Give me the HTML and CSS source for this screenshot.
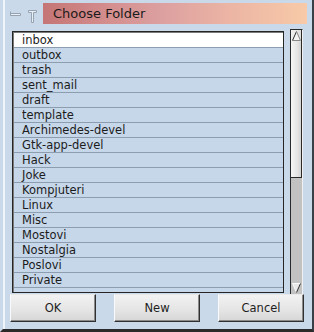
FILE: index.html
```html
<!DOCTYPE html>
<html>
<head>
<meta charset="utf-8">
<link rel="stylesheet" href="styles.css">
</head>
<body>
<div class="window">
  <div class="titlerow">
    <div class="ticons">
      <svg width="40" height="21" viewBox="0 0 40 21">
        <path d="M7.5 10.5 H17.5 V12.5 H7.5 Z" fill="#e6eef6" stroke="#97a3b0" stroke-width="1"/>
        <path d="M7.5 8.5 V12.5" stroke="#97a3b0" stroke-width="1"/>
        <path d="M25.5 7.5 H33.5 V9.5 H30.5 V19.5 H28.5 V9.5 H25.5 Z" fill="#e6eef6" stroke="#97a3b0" stroke-width="1"/>
      </svg>
    </div>
    <div class="title">Choose Folder</div>
  </div>
  <div class="content">
    <div class="list">
      <div class="row sel">inbox</div>
      <div class="row">outbox</div>
      <div class="row">trash</div>
      <div class="row">sent_mail</div>
      <div class="row">draft</div>
      <div class="row">template</div>
      <div class="row">Archimedes-devel</div>
      <div class="row">Gtk-app-devel</div>
      <div class="row">Hack</div>
      <div class="row">Joke</div>
      <div class="row">Kompjuteri</div>
      <div class="row">Linux</div>
      <div class="row">Misc</div>
      <div class="row">Mostovi</div>
      <div class="row">Nostalgia</div>
      <div class="row">Poslovi</div>
      <div class="row">Private</div>
    </div>
    <div class="scrollbar">
      <div class="arrow up">
        <svg width="11" height="12" viewBox="0 0 11 12">
          <path d="M1.5 10.5 L5.5 1.5 L9.5 10.5 Z" fill="#f4f4f4"/>
          <path d="M1.5 10.5 L5.5 1.5" stroke="#303030" stroke-width="1" fill="none"/>
          <path d="M5.5 1.5 L9.5 10.5 L1.5 10.5" stroke="#888" stroke-width="1" fill="none"/>
        </svg>
      </div>
      <div class="thumb"></div>
      <div class="trough"></div>
      <div class="arrow down">
        <svg width="11" height="12" viewBox="0 0 11 12">
          <path d="M1.5 1.5 L9.5 1.5 L5.5 10.5 Z" fill="#e8e8e8"/>
          <path d="M1.5 1.5 L9.5 1.5 M1.5 1.5 L5.5 10.5" stroke="#fafafa" stroke-width="1" fill="none"/>
          <path d="M9.5 1.5 L5.5 10.5" stroke="#303030" stroke-width="1" fill="none"/>
        </svg>
      </div>
    </div>
  </div>
  <div class="buttons">
    <div class="btn">OK</div>
    <div class="btn">New</div>
    <div class="btn">Cancel</div>
  </div>
</div>
</body>
</html>
```
FILE: styles.css
```css
html, body {
  margin: 0;
  padding: 0;
}
body {
  width: 314px;
  height: 332px;
  background: #c9d9e9;
  font-family: "DejaVu Sans", Verdana, sans-serif;
  color: #1c1c1c;
  overflow: hidden;
}
.window {
  box-sizing: border-box;
  width: 314px;
  height: 332px;
  border-left: 3px solid #c9d9e9;
  box-shadow: inset 2px 0 0 #eef4fa, inset 1px 0 0 #aebdcc;
  border-right: 2px solid #3a4048;
  border-bottom: 3px solid #2a2a2a;
  display: flex;
  flex-direction: column;
}
.titlerow {
  display: flex;
  margin-top: 3px;
  height: 21px;
}
.ticons {
  width: 40px;
  height: 21px;
}
.ticons svg {
  display: block;
}
.title {
  flex: 1;
  margin-right: 5px;
  background: linear-gradient(to right, #c57575 0%, #d48e8e 25%, #dca0a0 45%, #ebb4a4 70%, #f8caa8 100%);
  font-size: 13px;
  line-height: 21px;
  padding-left: 10px;
  color: #1a1a1a;
}
.content {
  display: flex;
  align-items: flex-start;
  margin-top: 5px;
  height: 265px;
  padding-left: 9px;
  gap: 6px;
}
.list {
  box-sizing: border-box;
  width: 272px;
  height: 262px;
  margin-top: 2px;
  border: 1px solid #262626;
  padding: 1px 0 0 1px;
  box-shadow: inset 1px 1px 0 #7a7a7a;
  background: #c6d7ea;
  overflow: hidden;
}
.row {
  height: 14px;
  line-height: 15px;
  border-bottom: 1px solid #8d9db0;
  font-size: 11.5px;
  padding-left: 8px;
  white-space: nowrap;
  overflow: hidden;
}
.row.sel {
  background: #ffffff;
}
.scrollbar {
  box-sizing: border-box;
  width: 13px;
  height: 265px;
  display: flex;
  flex-direction: column;
  border-left: 1px solid #2a2a2a;
  border-top: 1px solid #2a2a2a;
  border-right: 1px solid #f0f0f0;
  background: #c2c2c2;
}
.arrow {
  height: 12px;
  flex: none;
}
.arrow svg {
  display: block;
}
.arrow.up {
  background: linear-gradient(to right, #f2f2f2, #dedede);
  border-right: 1px solid #2a2a2a;
}
.thumb {
  height: 135px;
  flex: none;
  background: linear-gradient(to right, #f6f6f6, #e6e6e6 60%, #d4d4d4);
  border-right: 1px solid #2a2a2a;
  border-bottom: 1px solid #2a2a2a;
}
.trough {
  flex: 1;
  background: #c2c2c2;
}
.arrow.down {
  background: #c2c2c2;
}
.buttons {
  display: flex;
  gap: 18px;
  padding-left: 7px;
}
.btn {
  box-sizing: border-box;
  width: 86px;
  height: 28px;
  background: linear-gradient(to bottom, #f2f2f2, #e4e4e4 60%, #d6d6d6);
  border-top: 1px solid #e8e8e8;
  border-left: 1px solid #fafafa;
  border-right: 1px solid #303030;
  border-bottom: 1px solid #303030;
  box-shadow: inset -1px -1px 0 #8a8a8a;
  font-size: 11.5px;
  line-height: 26px;
  text-align: center;
  color: #1e1e1e;
}
```
